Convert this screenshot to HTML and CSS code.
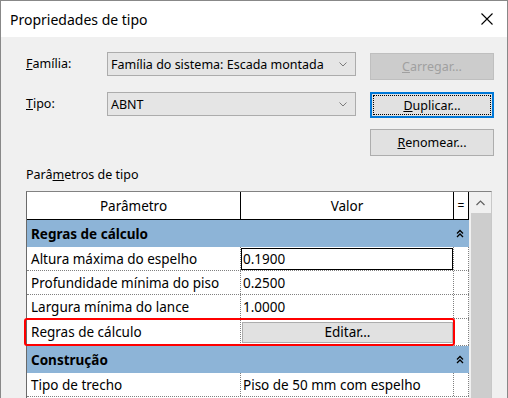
FILE: index.html
```html
<!DOCTYPE html>
<html lang="pt">
<head>
  <meta charset="UTF-8">
  <title>Propriedades de tipo</title>
  <link rel="stylesheet" href="styles.css">
</head>
<body>
  <div class="window">
    <div class="titlebar">
      <span class="title">Propriedades de tipo</span>
      <svg class="close" width="12" height="12" viewBox="0 0 12 12">
        <path d="M0.5 0.5 L11.5 11.5 M11.5 0.5 L0.5 11.5" stroke="#000" stroke-width="1.1" fill="none"/>
      </svg>
    </div>

    <div class="form">
      <div class="row row-first">
        <label class="label"><u>F</u>amília:</label>
        <div class="select">
          <span>Família do sistema: Escada montada</span>
          <svg class="chevron" width="8" height="5" viewBox="0 0 8 5"><path d="M0.5 0.5 L4 4 L7.5 0.5" stroke="#7a7a7a" fill="none"/></svg>
        </div>
        <button class="btn btn-disabled"><u>C</u>arregar...</button>
      </div>
      <div class="row row-second">
        <label class="label"><u>T</u>ipo:</label>
        <div class="select">
          <span>ABNT</span>
          <svg class="chevron" width="8" height="5" viewBox="0 0 8 5"><path d="M0.5 0.5 L4 4 L7.5 0.5" stroke="#7a7a7a" fill="none"/></svg>
        </div>
        <button class="btn btn-focus"><span class="focus-ring"><u>D</u>uplicar...</span></button>
      </div>
      <div class="row row-third">
        <button class="btn"><u>R</u>enomear...</button>
      </div>
      <div class="section-label">Parâ<u>m</u>etros de tipo</div>
    </div>

    <div class="grid">
      <div class="grid-main">
        <div class="grid-head">
          <div class="cell c-param">Parâmetro</div>
          <div class="cell c-value">Valor</div>
          <div class="cell c-eq">=</div>
        </div>

        <div class="group">
          <span>Regras de cálculo</span>
          <svg class="collapse" width="8" height="9" viewBox="0 0 8 9"><path d="M1 4.5 L4 1.5 L7 4.5 M1 8 L4 5 L7 8" stroke="#000" stroke-width="1.3" fill="none"/></svg>
        </div>
        <div class="prow">
          <div class="cell c-param">Altura máxima do espelho</div>
          <div class="cell c-value"><span class="edit-box">0.1900</span></div>
          <div class="cell c-eq"></div>
        </div>
        <div class="prow">
          <div class="cell c-param">Profundidade mínima do piso</div>
          <div class="cell c-value">0.2500</div>
          <div class="cell c-eq"></div>
        </div>
        <div class="prow">
          <div class="cell c-param">Largura mínima do lance</div>
          <div class="cell c-value">1.0000</div>
          <div class="cell c-eq"></div>
        </div>
        <div class="prow prow-tall">
          <div class="cell c-param">Regras de cálculo</div>
          <div class="cell c-value"><button class="cell-btn">Editar...</button></div>
          <div class="cell c-eq"></div>
        </div>

        <div class="group">
          <span>Construção</span>
          <svg class="collapse" width="8" height="9" viewBox="0 0 8 9"><path d="M1 4.5 L4 1.5 L7 4.5 M1 8 L4 5 L7 8" stroke="#000" stroke-width="1.3" fill="none"/></svg>
        </div>
        <div class="prow">
          <div class="cell c-param">Tipo de trecho</div>
          <div class="cell c-value">Piso de 50 mm com espelho</div>
          <div class="cell c-eq"></div>
        </div>
      </div>

      <div class="scrollbar">
        <div class="scroll-up">
          <svg width="9" height="6" viewBox="0 0 9 6"><path d="M0.5 5 L4.5 1 L8.5 5" stroke="#606060" stroke-width="1.2" fill="none"/></svg>
        </div>
        <div class="thumb"></div>
      </div>
    </div>

    <div class="highlight"></div>
  </div>
</body>
</html>
```

FILE: styles.css
```css
body {
  margin: 0;
  font-family: 'Noto Sans', sans-serif;
  color: #000;
}

.window {
  position: relative;
  width: 508px;
  height: 398px;
  box-sizing: border-box;
  border: 1px solid #888;
  border-bottom: none;
  background: #f0f0f0;
  overflow: hidden;
}

.titlebar {
  height: 36px;
  background: #fff;
  display: flex;
  align-items: center;
  justify-content: space-between;
  padding: 0 14px 0 9px;
}

.title {
  font-size: 14px;
}

.form {
  padding-left: 25px;
  font-size: 12.5px;
}

.row {
  display: flex;
  align-items: flex-start;
}

.row-first {
  margin-top: 15px;
  height: 28px;
}

.row-first .btn {
  margin-top: 1px;
  height: 27px;
}

.row-second {
  margin-top: 12px;
  height: 26px;
}

.row-second .btn {
  height: 26px;
}

.row-third {
  margin-top: 11px;
  height: 27px;
  padding-left: 330px;
}

.row-third .btn {
  height: 27px;
}

.label {
  width: 81px;
  flex-shrink: 0;
  line-height: 24px;
}

.select {
  width: 249px;
  flex-shrink: 0;
  height: 24px;
  box-sizing: border-box;
  border: 1px solid #acacac;
  background: #e5e5e5;
  display: flex;
  align-items: center;
  justify-content: space-between;
  padding: 0 8px 0 3px;
}

.btn {
  width: 124px;
  flex-shrink: 0;
  margin-left: 14px;
  box-sizing: border-box;
  border: 1px solid #adadad;
  background: #e1e1e1;
  font-family: inherit;
  font-size: 12.5px;
  color: #000;
  padding: 0;
}

.btn-disabled {
  background: #cccccc;
  border-color: #bfbfbf;
  color: #a0a0a0;
}

.btn-focus {
  border: 2px solid #0078d7;
  padding: 1px;
}

.focus-ring {
  display: flex;
  align-items: center;
  justify-content: center;
  height: 100%;
  box-sizing: border-box;
  border: 1px dotted #000;
}

.section-label {
  margin-top: 11px;
  line-height: 16px;
}

.grid {
  margin: 8px 0 0 25px;
  width: 466px;
  height: 220px;
  box-sizing: border-box;
  border-top: 1px solid #828282;
  border-left: 1px solid #6a6a6a;
  border-right: 1px solid #c8c8c8;
  display: flex;
  font-size: 13.5px;
}

.grid-main {
  width: 442px;
  background: #fff;
}

.grid-head {
  display: flex;
  height: 27px;
  border-bottom: 1px solid #000;
}

.grid-head .cell {
  justify-content: center;
  border-right: 1px solid #000;
}

.cell {
  display: flex;
  align-items: center;
  box-sizing: border-box;
  white-space: nowrap;
}

.c-param {
  width: 214px;
}

.c-value {
  width: 213px;
}

.c-eq {
  width: 15px;
  font-size: 12px;
}

.group {
  height: 27px;
  background: #8db4d7;
  display: flex;
  align-items: center;
  justify-content: space-between;
  padding: 0 5px 0 4px;
  font-weight: bold;
}

.prow {
  display: flex;
  height: 24px;
  border-bottom: 1px dotted #808080;
  box-sizing: border-box;
}

.prow-tall {
  height: 27px;
}

.prow .cell {
  border-right: 1px dotted #808080;
}

.prow .c-param {
  padding-left: 4px;
}

.prow .c-value {
  padding-left: 2px;
}

.edit-box {
  display: flex;
  align-items: center;
  height: 22px;
  width: 212px;
  margin-left: -2px;
  padding-left: 1px;
  box-sizing: border-box;
  border: 1px solid #000;
}

.cell-btn {
  width: 212px;
  height: 21px;
  margin-left: -1px;
  border: 1px solid #adadad;
  background: #e1e1e1;
  font-family: inherit;
  font-size: 13.5px;
  padding: 0;
}

.scrollbar {
  width: 22px;
  padding-left: 1px;
  box-sizing: border-box;
  display: flex;
  flex-direction: column;
}

.scroll-up {
  height: 21px;
  display: flex;
  align-items: center;
  justify-content: center;
}

.thumb {
  flex: 1;
  background: #cdcdcd;
  margin-left: 1px;
}

.highlight {
  position: absolute;
  left: 23px;
  top: 317px;
  width: 431px;
  height: 28px;
  box-sizing: border-box;
  border: 2px solid #f00;
  border-radius: 3px;
}
```
